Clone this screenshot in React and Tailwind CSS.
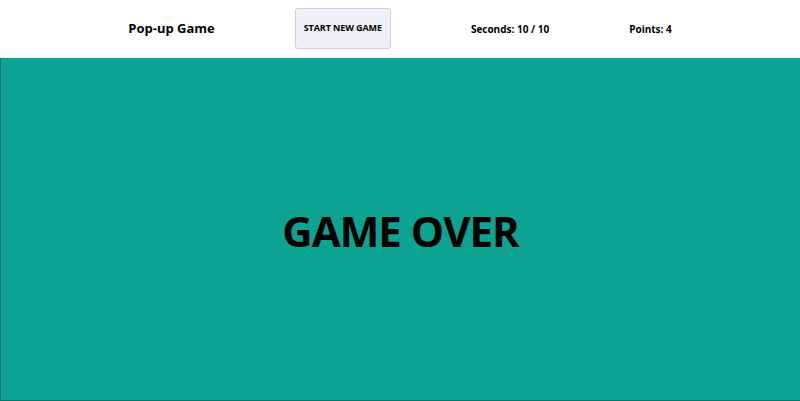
import React from "react";

const App = () => {
  return (
    <div
      className="flex flex-col w-full h-[401px] bg-white text-black"
      style={{ fontFamily: '"Open Sans", "Noto Sans", sans-serif' }}
    >
      <div className="flex items-center justify-center gap-20 h-[58px] shrink-0">
        <h1 className="text-[13px] font-bold">Pop-up Game</h1>
        <button className="h-[41px] px-[8px] mb-[2px] rounded-[3px] border border-[#cfcfd8] bg-[#efeff6] text-[9px] font-bold tracking-[-0.1px]">
          START NEW GAME
        </button>
        <span className="text-[10px] font-bold">Seconds: 10 / 10</span>
        <span className="text-[10px] font-bold">Points: 4</span>
      </div>
      <div className="flex flex-1 items-center justify-center bg-[#0ca392] border-l border-b border-[#08776a]">
        <h2 className="text-[42px] font-bold leading-none mt-[4px] tracking-[-1px]">GAME OVER</h2>
      </div>
    </div>
  );
};

export default App;
